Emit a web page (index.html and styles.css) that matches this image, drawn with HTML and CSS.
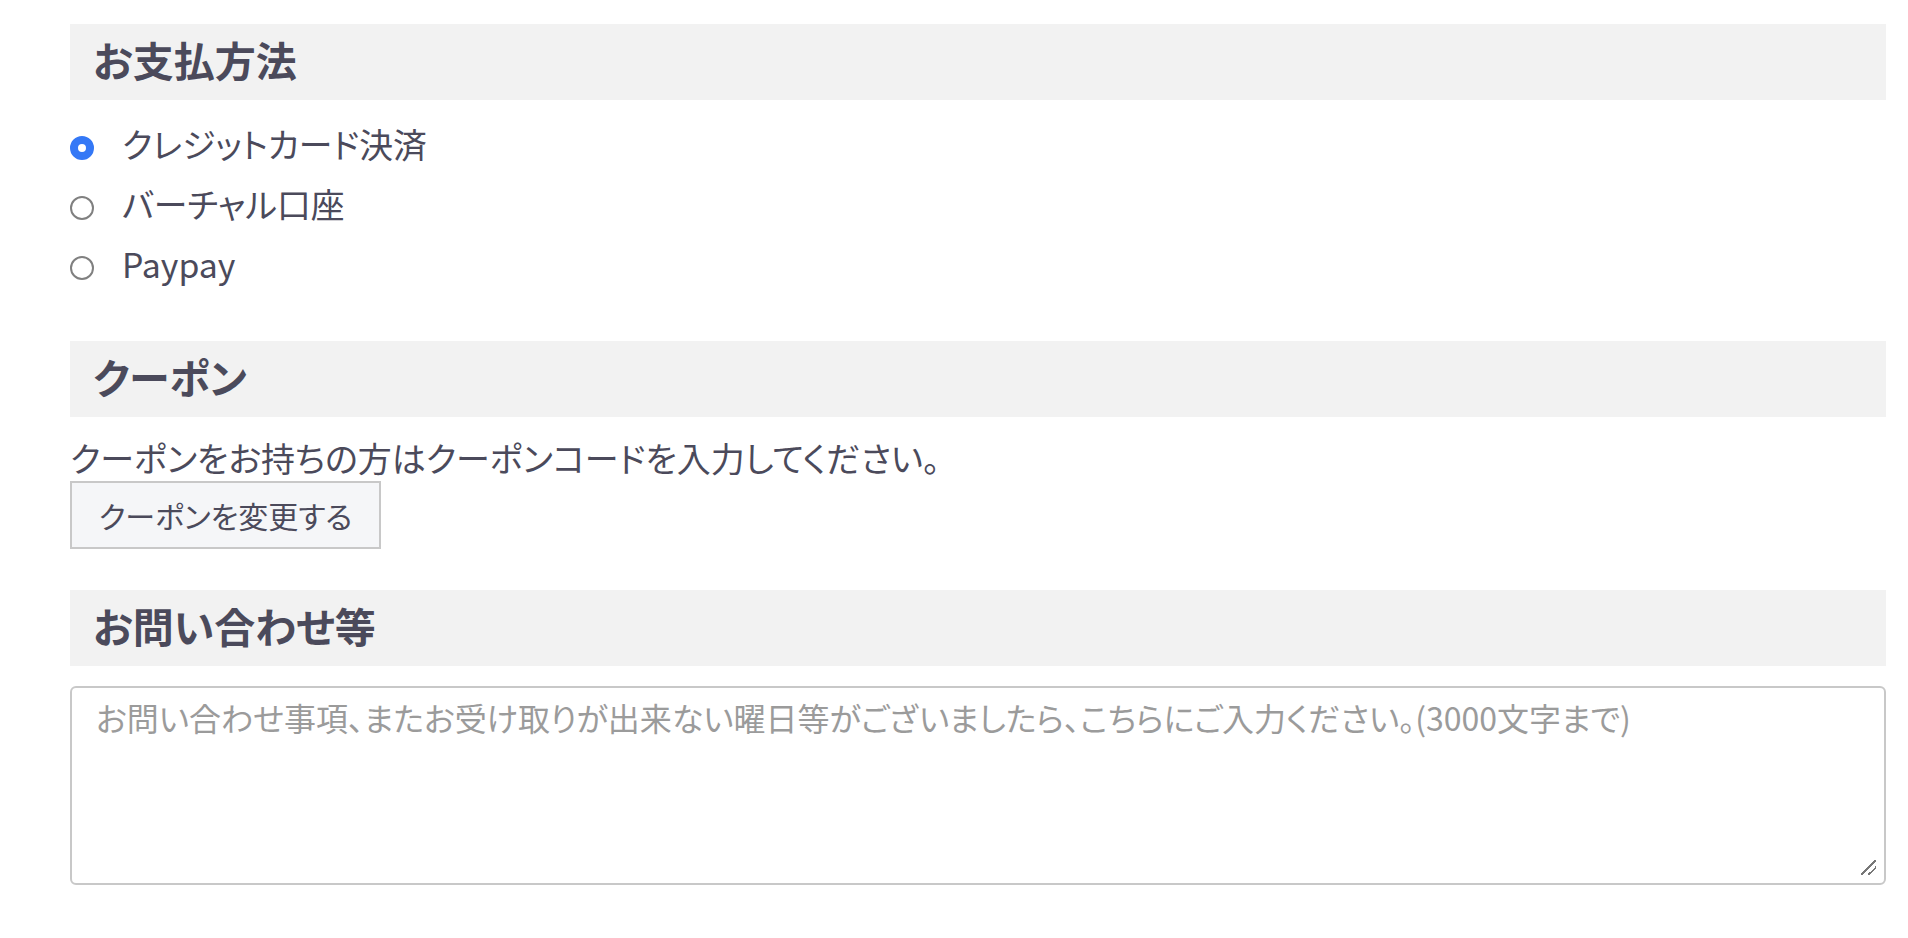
FILE: index.html
```html
<!DOCTYPE html>
<html lang="ja">
<head>
    <meta charset="UTF-8">
    <meta name="viewport" content="width=device-width, initial-scale=1.0">
    <title>ご注文手続き</title>
    <link rel="stylesheet" href="styles.css">
</head>
<body>
    <div class="order-form">
        <section class="block">
            <h2 class="block-title">お支払方法</h2>
            <ul class="pay-list">
                <li><label><input type="radio" name="payment" value="credit" checked><span>クレジットカード決済</span></label></li>
                <li><label><input type="radio" name="payment" value="virtual"><span>バーチャル口座</span></label></li>
                <li><label><input type="radio" name="payment" value="paypay"><span>Paypay</span></label></li>
            </ul>
        </section>

        <section class="block">
            <h2 class="block-title">クーポン</h2>
            <p class="coupon-note">クーポンをお持ちの方はクーポンコードを入力してください。</p>
            <button type="button" class="coupon-btn">クーポンを変更する</button>
        </section>

        <section class="block">
            <h2 class="block-title">お問い合わせ等</h2>
            <textarea class="inquiry" name="inquiry" maxlength="3000" placeholder="お問い合わせ事項、またお受け取りが出来ない曜日等がございましたら、こちらにご入力ください。(3000文字まで)"></textarea>
        </section>
    </div>
</body>
</html>
```

FILE: styles.css
```css
body {
    margin: 0;
    font-family: "Noto Sans CJK JP", "Noto Sans", sans-serif;
    font-feature-settings: "palt";
    color: #4b4a5b; /* Dark slate */
    background-color: #ffffff;
}

.order-form {
    padding: 24px 22px 40px 70px;
}

.block-title {
    box-sizing: border-box;
    margin: 0;
    height: 76px;
    line-height: 70px;
    padding: 0 0 6px 23px;
    background-color: #f2f2f2; /* Light gray bar */
    font-size: 41px;
    font-weight: 700;
}

/* Payment methods */
.pay-list {
    list-style: none;
    margin: 18px 0 43px;
    padding: 0;
}

.pay-list label {
    display: flex;
    align-items: center;
    gap: 28px;
    height: 60px;
    font-size: 33.8px;
    cursor: pointer;
}

.pay-list label span {
    padding-bottom: 10px;
}

.pay-list input[type="radio"] {
    appearance: none;
    -webkit-appearance: none;
    flex: none;
    width: 24px;
    height: 24px;
    margin: 0;
    border: 2.5px solid #808080;
    border-radius: 50%;
    background-color: #ffffff;
}

.pay-list input[type="radio"]:checked {
    border: 8px solid #3478f6; /* Blue */
}

/* Coupon */
.coupon-note {
    margin: 18px 0 0;
    font-size: 34px;
    line-height: 46px;
}

.coupon-btn {
    display: block;
    width: 311px;
    height: 68px;
    margin: 0 0 41px;
    padding: 0;
    border: 2px solid #c8c8c8;
    border-radius: 0;
    background-color: #f5f6f8;
    color: inherit;
    font-family: inherit;
    font-feature-settings: "palt";
    font-size: 30px;
    cursor: pointer;
}

/* Inquiry */
.inquiry {
    display: block;
    box-sizing: border-box;
    width: 100%;
    height: 199px;
    margin-top: 20px;
    padding: 7px 24px;
    border: 2px solid #c8c8c8;
    border-radius: 6px;
    font-family: inherit;
    font-feature-settings: "palt";
    font-size: 32px;
    line-height: 45px;
    color: inherit;
    resize: none;
    /* resize grip */
    background: linear-gradient(135deg, transparent 46%, #777777 46% 54%, transparent 54% 70%, #777777 70% 78%, transparent 78%) no-repeat right 8px bottom 8px / 15px 15px;
}

.inquiry::placeholder {
    color: #9b9b9b;
}
```
